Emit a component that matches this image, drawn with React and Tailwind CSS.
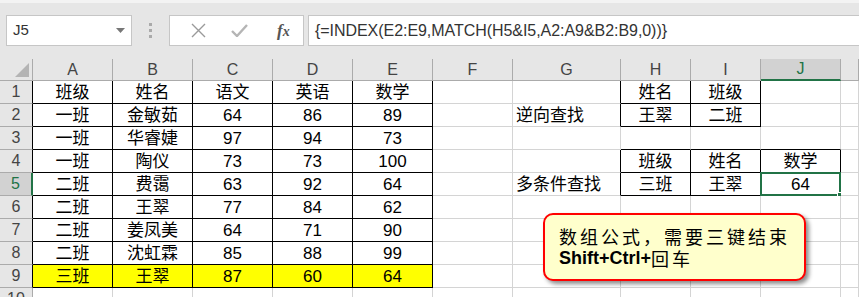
import React from "react";

const COLS = ["A", "B", "C", "D", "E", "F", "G", "H", "I", "J", "K"];

const DATA = {
  1: { A: "班级", B: "姓名", C: "语文", D: "英语", E: "数学", H: "姓名", I: "班级" },
  2: { A: "一班", B: "金敏茹", C: "64", D: "86", E: "89", G: "逆向查找", H: "王翠", I: "二班" },
  3: { A: "一班", B: "华睿婕", C: "97", D: "94", E: "73" },
  4: { A: "一班", B: "陶仪", C: "73", D: "73", E: "100", H: "班级", I: "姓名", J: "数学" },
  5: { A: "二班", B: "费霭", C: "63", D: "92", E: "64", G: "多条件查找", H: "三班", I: "王翠", J: "64" },
  6: { A: "二班", B: "王翠", C: "77", D: "84", E: "62" },
  7: { A: "二班", B: "姜凤美", C: "64", D: "71", E: "90" },
  8: { A: "二班", B: "沈虹霖", C: "85", D: "88", E: "99" },
  9: { A: "三班", B: "王翠", C: "87", D: "60", E: "64" },
  10: {},
};

function inT(r, c) {
  if (r >= 1 && r <= 9 && c >= 0 && c <= 4) return true;
  if (r >= 1 && r <= 2 && c >= 7 && c <= 8) return true;
  if (r >= 4 && r <= 5 && c >= 7 && c <= 9) return true;
  return false;
}

const FONT = { fontFamily: '"Liberation Sans", "Noto Sans CJK SC", sans-serif' };

function Cell({ r, ci }) {
  const col = COLS[ci];
  const text = DATA[r][col];
  const rightBlack = inT(r, ci) || inT(r, ci + 1);
  const bottomBlack = inT(r, ci) || inT(r + 1, ci);
  const yellow = r === 9 && ci <= 4;
  const left = col === "G";
  return (
    <div
      className={
        "relative flex h-[23px] items-center border-r border-b text-[17px] leading-none text-black " +
        (rightBlack ? "border-r-black " : "border-r-[#d4d4d4] ") +
        (bottomBlack ? "border-b-black " : "border-b-[#d4d4d4] ") +
        (yellow ? "bg-[#ffff00] " : "bg-white ") +
        (left ? "justify-start pl-[3px]" : "justify-center")
      }
    >
      <span className="pt-[1px]">{text}</span>
      {r === 5 && col === "J" && (
        <div className="pointer-events-none absolute -left-[1px] -top-[1px] h-[24px] w-[81px] border-2 border-[#217346]">
          <div className="absolute -bottom-[4px] -right-[4px] h-[6px] w-[6px] border border-white bg-[#217346]" />
        </div>
      )}
    </div>
  );
}

export default function App() {
  const rows = [1, 2, 3, 4, 5, 6, 7, 8, 9, 10];
  return (
    <div className="relative h-[297px] w-[859px] overflow-hidden bg-white" style={FONT}>
      {/* formula bar */}
      <div className="relative flex h-[59px] items-start border-t-[3px] border-t-[#f3f3f3] bg-[#e6e6e6] pt-[12px]">
        <div className="ml-[6px] flex h-[31px] w-[126px] items-center justify-between border border-[#c6c6c6] bg-white pl-[6px] pr-[6px]">
          <span className="text-[15px] text-[#333]">J5</span>
          <svg width="9" height="5" viewBox="0 0 9 5">
            <path d="M0 0 L9 0 L4.5 5 Z" fill="#777" />
          </svg>
        </div>
        <div className="ml-[17px] mt-[8px] flex flex-col gap-[3px]">
          <div className="h-[3px] w-[3px] bg-[#aaa]" />
          <div className="h-[3px] w-[3px] bg-[#aaa]" />
          <div className="h-[3px] w-[3px] bg-[#aaa]" />
        </div>
        <div className="ml-[17px] flex h-[31px] w-[135px] items-center border border-[#c6c6c6] bg-white">
          <svg className="ml-[21px]" width="15" height="15" viewBox="0 0 15 15">
            <path d="M1 1 L14 14 M14 1 L1 14" stroke="#9a9a9a" strokeWidth="1.4" />
          </svg>
          <svg className="ml-[25px]" width="17" height="13" viewBox="0 0 17 13">
            <path d="M1 7 L6 12 L16 1" stroke="#b5b5b5" strokeWidth="2.4" fill="none" />
          </svg>
          <span
            className="ml-[29px] text-[17px] italic text-[#555]"
            style={{ fontFamily: '"Liberation Serif", serif', fontWeight: 700 }}
          >
            f<span className="text-[14px]">x</span>
          </span>
        </div>
        <div className="ml-[4px] flex h-[31px] flex-1 items-center border border-r-0 border-[#c6c6c6] bg-white pl-[6px]">
          <span className="text-[16px] tracking-[-0.05px] text-[#333]">
            {"{=INDEX(E2:E9,MATCH(H5&I5,A2:A9&B2:B9,0))}"}
          </span>
        </div>
      </div>

      {/* grid */}
      <div className="grid grid-cols-[33px_80px_80px_80px_80px_80px_80px_108px_70px_70px_80px_1fr]">
        {/* header row */}
        <div className="relative h-[22px] border-r border-b border-r-[#ababab] border-b-[#ababab] bg-[#e6e6e6]">
          <svg className="absolute bottom-[3px] right-[3px]" width="14" height="14" viewBox="0 0 14 14">
            <path d="M14 0 L14 14 L0 14 Z" fill="#b4b4b4" />
          </svg>
        </div>
        {COLS.map((c) =>
          c === "J" ? (
            <div
              key={c}
              className="flex h-[22px] items-center justify-center border-r border-b-2 border-r-[#ababab] border-b-[#217346] bg-[#d2d2d2] text-[16px] text-[#217346]"
            >
              {c}
            </div>
          ) : (
            <div
              key={c}
              className="flex h-[22px] items-center justify-center border-r border-b border-r-[#ababab] border-b-[#ababab] bg-[#e6e6e6] text-[16px] text-[#444]"
            >
              {c === "K" ? "" : c}
            </div>
          )
        )}
        {rows.map((r) => (
          <React.Fragment key={r}>
            {r === 5 ? (
              <div className="flex h-[23px] items-center justify-center border-r-2 border-b border-r-[#217346] border-b-[#ababab] bg-[#d2d2d2] text-[16px] text-[#217346]">
                {r}
              </div>
            ) : (
              <div
                className={
                  "flex h-[23px] items-center justify-center border-r border-b border-b-[#ababab] bg-[#e6e6e6] text-[16px] text-[#444] " +
                  (r <= 9 ? "border-r-black" : "border-r-[#ababab]")
                }
              >
                {r}
              </div>
            )}
            {COLS.map((c, ci) => (
              <Cell key={c} r={r} ci={ci} />
            ))}
          </React.Fragment>
        ))}
      </div>

      {/* callout */}
      <div className="absolute left-[543px] top-[213px] flex h-[68px] w-[263px] flex-col justify-center rounded-[10px] border-2 border-[#ff0000] bg-[#ffffcc] pl-[14px] shadow-[3px_3px_4px_rgba(0,0,0,0.45)]">
        <div
          className="text-[18px] leading-[22px] tracking-[3px] text-black"
          style={{ fontFamily: '"Noto Sans CJK SC", sans-serif' }}
        >
          数组公式，需要三键结束
        </div>
        <div className="flex text-[18px] leading-[22px] text-black">
          <span className="font-bold" style={{ fontFamily: '"Liberation Sans", sans-serif' }}>
            Shift+Ctrl+
          </span>
          <span className="tracking-[3px]" style={{ fontFamily: '"Noto Sans CJK SC", sans-serif' }}>
            回车
          </span>
        </div>
      </div>
    </div>
  );
}
